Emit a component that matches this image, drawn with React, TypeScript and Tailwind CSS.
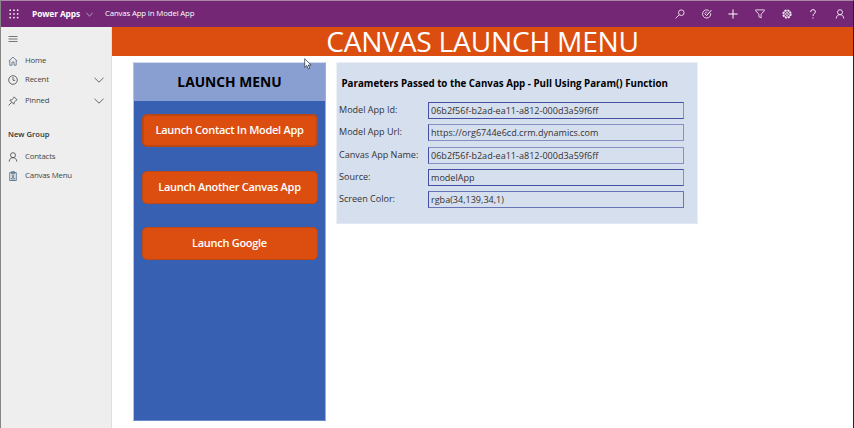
import React from 'react';

type IconProps = { children: React.ReactNode; className?: string };

function Icon({ children, className = 'size-[10px]' }: IconProps) {
  return (
    <svg viewBox="0 0 10 10" fill="none" stroke="currentColor" strokeWidth="0.8" className={`shrink-0 ${className}`}>
      {children}
    </svg>
  );
}

const person = (
  <>
    <circle cx="5" cy="3.2" r="2.5" />
    <path d="M1.2 9.6C1.4 7 2.8 5.7 5 5.7S8.6 7 8.8 9.6" />
  </>
);

const headerIcons: React.ReactNode[] = [
  <>
    <circle cx="6.3" cy="3.7" r="2.8" />
    <path d="M4.2 5.8.6 9.4" />
  </>,
  <>
    <path d="M6.9 1.5A4.1 4.1 0 1 0 8.7 4.2" />
    <path d="M2.8 4.7 4.6 6.5 9.4 1.2" strokeWidth="1" />
    <path d="M5.6 3A2.2 2.2 0 0 0 2.9 4.6" strokeWidth="0.6" />
  </>,
  <path d="M5 .4V9.6M.4 5H9.6" strokeWidth="1" />,
  <path d="M.7.9H9.3V1.8L6.1 5.2V8.9L3.9 7.7V5.2L.7 1.8Z" />,
  <>
    <circle cx="5" cy="5" r="4" strokeWidth="1.2" strokeDasharray="2 1.14" />
    <circle cx="5" cy="5" r="3.2" />
    <circle cx="5" cy="5" r="1.4" />
  </>,
  <path d="M2.7 3C2.7 1.5 3.6.7 5 .7S7.4 1.5 7.4 2.8C7.4 4.5 5 4.6 5 6.9M5 8.4V9.5" strokeWidth="1" />,
  person,
];

function Chevron({ className }: { className?: string }) {
  return (
    <Icon className={className}>
      <path d="M.5 2.8 5 7.2 9.5 2.8" />
    </Icon>
  );
}

type NavProps = { label: string; icon: React.ReactNode; height: string; expandable?: boolean };

function NavItem({ label, icon, height, expandable }: NavProps) {
  return (
    <div className={`flex items-center pl-[7px] pr-[7px] text-[#444] ${height}`}>
      <Icon>{icon}</Icon>
      <span className="ml-[7px] text-[7.8px] tracking-[-0.18px] whitespace-nowrap">{label}</span>
      {expandable && <Chevron className="ml-auto size-[10px]" />}
    </div>
  );
}

function LaunchButton({ label, className }: { label: string; className: string }) {
  return (
    <button
      className={`flex w-[176px] items-center justify-center rounded-[5px] border-[#bd4714] bg-[#dc4e0f] text-[11px] font-semibold tracking-[-0.29px] whitespace-nowrap text-white ${className}`}
    >
      {label}
    </button>
  );
}

const fields = [
  { label: 'Model App Id:', value: '06b2f56f-b2ad-ea11-a812-000d3a59f6ff', row: 'mb-[5px]', box: 'border-[#424fa3] border-r-[#8591c4]' },
  { label: 'Model App Url:', value: 'https://org6744e6cd.crm.dynamics.com', row: 'mb-[6px]', box: 'border-[#8591c4] border-l-[#424fa3]' },
  { label: 'Canvas App Name:', value: '06b2f56f-b2ad-ea11-a812-000d3a59f6ff', row: 'mb-[5px]', box: 'border-[#8591c4] border-l-[#424fa3]' },
  { label: 'Source:', value: 'modelApp', row: 'mb-[5px]', box: 'border-[#424fa3] border-r-[#8591c4]' },
  { label: 'Screen Color:', value: 'rgba(34,139,34,1)', row: '', box: 'border-[#6874b5] border-l-[#424fa3]' },
];

export default function App() {
  return (
    <div className="relative flex h-[428px] w-[854px] flex-col overflow-hidden border-t border-l border-r border-t-[#a68aa8] border-l-[#858585] border-r-[#222] bg-white font-['Open_Sans',sans-serif]">
      <header className="flex h-[26px] shrink-0 items-center bg-[#742774] pr-[8px] pl-[8px] text-white">
        <svg viewBox="0 0 10 10" className="size-[10px]" fill="currentColor">
          {[0.5, 4.2, 7.9].map((y) => [0.5, 4.2, 7.9].map((x) => <rect key={`${x}-${y}`} x={x} y={y} width="1.5" height="1.5" />))}
        </svg>
        <span className="ml-[13px] w-[48px] text-[8.4px] font-bold tracking-[-0.1px] whitespace-nowrap">Power Apps</span>
        <Chevron className="ml-[6px] size-[7px]" />
        <span className="ml-[12px] text-[7.8px] tracking-[-0.15px] whitespace-nowrap">Canvas App In Model App</span>
        <div className="ml-auto flex gap-[16.7px]">
          {headerIcons.map((icon, i) => (
            <Icon key={i}>{icon}</Icon>
          ))}
        </div>
      </header>

      <div className="flex min-h-0 flex-1">
        <nav className="flex w-[111px] shrink-0 flex-col border-r border-[#dedede] bg-[#eeeeee]">
          <div className="flex h-[24px] items-center pl-[7px] text-[#555]">
            <Icon>
              <path d="M.5 2.5H9.5M.5 5H9.5M.5 7.5H9.5" />
            </Icon>
          </div>
          <NavItem
            label="Home"
            height="h-[19px]"
            icon={<path d="M.8 5.1 5 1.1 9.2 5.1M1.8 4.2V9.2H4V6H6V9.2H8.2V4.2" stroke="#526b82" />}
          />
          <NavItem
            label="Recent"
            height="h-[20px]"
            expandable
            icon={
              <>
                <circle cx="5" cy="5" r="4.3" />
                <path d="M5 2V5.3H7.2" />
              </>
            }
          />
          <NavItem
            label="Pinned"
            height="h-[21px]"
            expandable
            icon={<path d="M6.2.9 9.1 3.8 8.2 4.2 6.3 6.1 5.8 8.2 1.8 4.2 3.9 3.7 5.8 1.8ZM3.8 6.2.6 9.4" />}
          />
          <div className="mt-[16px] flex h-[16px] items-center pl-[7px] text-[7.6px] font-semibold whitespace-nowrap text-[#333]">
            New Group
          </div>
          <NavItem label="Contacts" height="mt-[4px] h-[19px]" icon={person} />
          <NavItem
            label="Canvas Menu"
            height="h-[20px]"
            icon={
              <g stroke="#46627d">
                <path d="M1.7 1.7H8.3V9.5H1.7ZM3.5.7H6.5V2.7H3.5Z" />
                <circle cx="5" cy="4.9" r="1" />
                <path d="M3.2 8C3.2 6 6.8 6 6.8 8Z" />
              </g>
            }
          />
        </nav>

        <main className="flex min-w-0 flex-1 flex-col">
          <h1 className="flex h-[29px] shrink-0 items-center justify-center bg-[#dc4e0f] text-[28.2px] leading-[29px] tracking-[-0.25px] whitespace-nowrap text-white">
            CANVAS LAUNCH MENU
          </h1>
          <div className="flex items-start pt-[6px] pl-[21px]">
            <section className="flex h-[359px] w-[193px] shrink-0 flex-col items-center border border-t-[#d3dcee] border-r-[#9bb0d8] border-b-[#698bc9] border-l-[#b3c3e2] bg-[#3760b2]">
              <h2 className="flex h-[38px] w-full shrink-0 items-center justify-center bg-[#899fd1] text-[13.8px] font-bold text-black">LAUNCH MENU</h2>
              <LaunchButton label="Launch Contact In Model App" className="mt-[13px] h-[33px] border-2" />
              <LaunchButton label="Launch Another Canvas App" className="mt-[24px] h-[33px] border" />
              <LaunchButton label="Launch Google" className="mt-[23px] h-[33px] border" />
            </section>
            <section className="ml-[10px] h-[162px] w-[362px] border border-[#edf1f7] border-b-[#e2e8f3] bg-[#d6dfee]">
              <h3 className="mt-[13px] ml-[4.5px] h-[16px] text-[9.75px] leading-[16px] font-bold whitespace-nowrap text-black">
                Parameters Passed to the Canvas App - Pull Using Param() Function
              </h3>
              <div className="mt-[10px] flex flex-col pl-[2px]">
                {fields.map((f) => (
                  <div key={f.label} className={`flex h-[17px] items-center text-[9.05px] text-[#333] ${f.row}`}>
                    <span className="w-[89px] pb-[2px] whitespace-nowrap">{f.label}</span>
                    <span className={`flex h-[17px] w-[256px] items-center border pl-[2px] whitespace-nowrap ${f.box}`}>{f.value}</span>
                  </div>
                ))}
              </div>
            </section>
          </div>
        </main>
      </div>

      <svg viewBox="0 0 8 12" className="absolute top-[57px] left-[303px] h-[12px] w-[8px]" fill="white" stroke="#333d50" strokeWidth="0.8">
        <path d="M.7.7V9.4L2.8 7.5 4.3 11 5.8 10.3 4.3 7H7.1Z" />
      </svg>
    </div>
  );
}
